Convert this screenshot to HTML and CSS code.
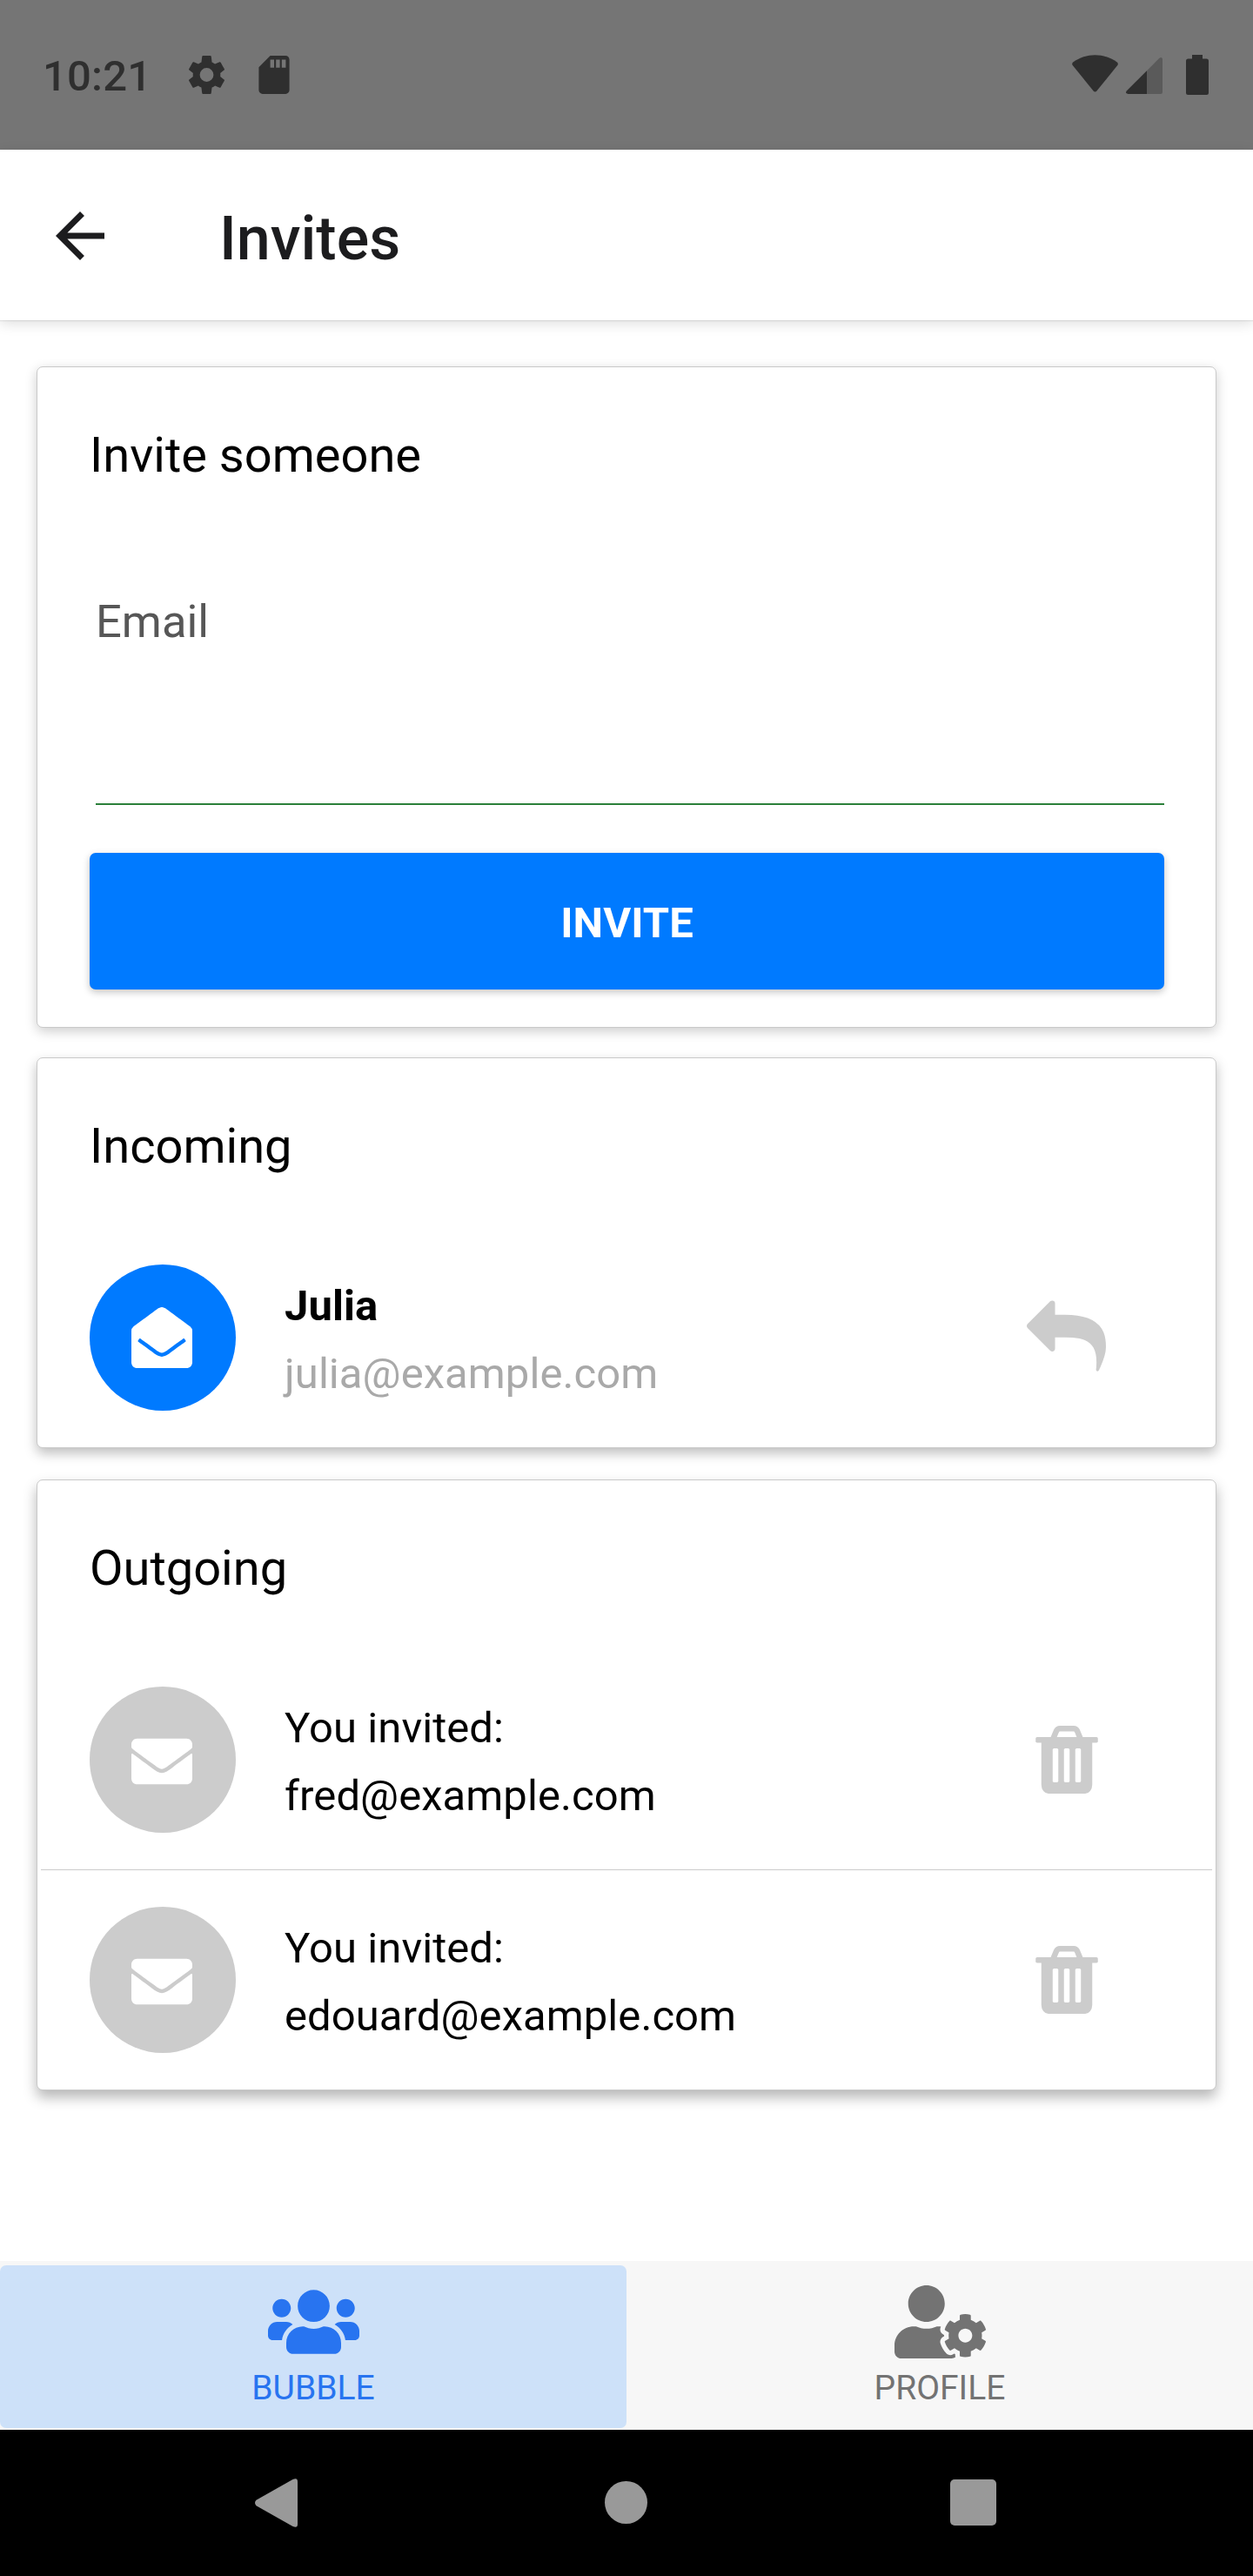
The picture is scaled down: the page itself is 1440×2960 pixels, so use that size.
FILE: index.html
```html
<!DOCTYPE html>
<html lang="en">
<head>
<meta charset="utf-8">
<title>Invites</title>
<link rel="stylesheet" href="styles.css">
</head>
<body>
<svg class="sprite" aria-hidden="true">
  <symbol id="envelope" viewBox="0 0 512 512"><path d="M502.3 190.8c3.9-3.1 9.7-.2 9.7 4.7V400c0 26.5-21.5 48-48 48H48c-26.5 0-48-21.5-48-48V195.6c0-5 5.7-7.8 9.7-4.7 22.4 17.4 52.1 39.5 154.1 113.6 21.1 15.4 56.7 47.8 92.2 47.6 35.7.3 72-32.8 92.3-47.6 102-74.1 131.6-96.3 154-113.7zM256 320c23.2.4 56.6-29.2 73.4-41.4 132.7-96.3 142.8-104.7 173.4-128.7 5.8-4.5 9.2-11.5 9.2-18.9v-19c0-26.5-21.5-48-48-48H48c-26.5 0-48 21.5-48 48v19c0 7.4 3.4 14.3 9.2 18.9 30.6 23.9 40.7 32.4 173.4 128.7 16.8 12.2 50.2 41.8 73.4 41.4z"/></symbol>
  <symbol id="trash" viewBox="192 128 1408 1536"><path d="M704 1376v-704q0-14-9-23t-23-9h-64q-14 0-23 9t-9 23v704q0 14 9 23t23 9h64q14 0 23-9t9-23zm256 0v-704q0-14-9-23t-23-9h-64q-14 0-23 9t-9 23v704q0 14 9 23t23 9h64q14 0 23-9t9-23zm256 0v-704q0-14-9-23t-23-9h-64q-14 0-23 9t-9 23v704q0 14 9 23t23 9h64q14 0 23-9t9-23zm-544-992h448l-48-117q-7-9-17-11h-317q-10 2-17 11zm928 32v64q0 14-9 23t-23 9h-96v948q0 83-47 143.5t-113 60.5h-832q-66 0-113-58.5t-47-141.5v-952h-96q-14 0-23-9t-9-23v-64q0-14 9-23t23-9h309l70-167q15-37 54-63t79-26h320q40 0 79 26t54 63l70 167h309q14 0 23 9t9 23z"/></symbol>
</svg>

<div class="status-bar">
  <span class="clock">10:21</span>
  <svg class="status-gear" viewBox="2.2 2 19.6 20"><path d="M19.14 12.94c.04-.3.06-.61.06-.94 0-.32-.02-.64-.07-.94l2.03-1.58c.18-.14.23-.41.12-.61l-1.92-3.32c-.12-.22-.37-.29-.59-.22l-2.39.96c-.5-.38-1.03-.7-1.62-.94l-.36-2.94c-.04-.24-.24-.41-.48-.41h-3.84c-.24 0-.43.17-.47.41l-.36 2.94c-.59.24-1.13.57-1.62.94l-2.39-.96c-.22-.08-.47 0-.59.22L2.74 8.87c-.12.21-.08.47.12.61l2.03 1.58c-.05.3-.09.63-.09.94s.02.64.07.94l-2.03 1.58c-.18.14-.23.41-.12.61l1.92 3.32c.12.22.37.29.59.22l2.39-.96c.5.38 1.03.7 1.62.94l.36 2.94c.05.24.24.41.48.41h3.84c.24 0 .44-.17.47-.41l.36-2.94c.59-.24 1.13-.56 1.62-.94l2.39.96c.22.08.47 0 .59-.22l1.92-3.32c.12-.22.07-.47-.12-.61l-2.01-1.58zM12 15.6A3.6 3.6 0 1 1 12 8.4a3.6 3.6 0 0 1 0 7.2z"/></svg>
  <svg class="status-sd" viewBox="4 2 16 20"><path fill-rule="evenodd" d="M18 2h-8L4.02 8 4 20c0 1.1.9 2 2 2h12c1.1 0 2-.9 2-2V4c0-1.1-.9-2-2-2zM10 4h2v4.200h-2zM13 4h2v4.200h-2zM16 4h2.100v4.200h-2.100z"/></svg>
  <svg class="status-wifi" viewBox="0 0 53 43"><path d="M1.200 8.500C16-2.500 37-2.500 51.800 8.500Q53.600 10 52.300 12L28.600 41.300Q26.500 43.800 24.400 41.300L.7 12Q-.6 10 1.200 8.500z"/></svg>
  <svg class="status-signal" viewBox="0 0 42 42"><path opacity=".38" d="M24 15.300L38.200 1Q39.300 0 40.500 0Q42 .3 42 2V40Q42 42 40 42H24z"/><path d="M24 15.300V42H2.500Q-1.200 41.500.7 38.600z"/></svg>
  <svg class="status-battery" viewBox="0 0 26 46"><path d="M7 0h12v4.500h4.500Q26 4.500 26 7v36.500Q26 46 23.500 46h-21Q0 46 0 43.500V7Q0 4.500 2.500 4.500H7z"/></svg>
</div>

<header class="app-bar">
  <svg class="back" viewBox="0 0 24 24"><path d="M20 11H7.830l5.590-5.590L12 4l-8 8 8 8 1.410-1.410L7.830 13H20v-2z"/></svg>
  <h1 class="app-title">Invites</h1>
</header>

<main class="content">
  <section class="card card-form">
    <h2 class="card-title">Invite someone</h2>
    <label class="field"><span class="field-label">Email</span></label>
    <button class="invite-button" type="button">INVITE</button>
  </section>

  <section class="card card-incoming">
    <h2 class="card-title">Incoming</h2>
    <div class="row">
      <span class="avatar avatar-active">
        <svg class="avatar-icon" viewBox="0 0 512 512"><path d="M512 464c0 26.510-21.490 48-48 48H48c-26.510 0-48-21.490-48-48V200.724a48 48 0 0 1 18.387-37.776c24.913-19.529 45.501-35.365 164.200-121.511C199.412 29.170 232.797-.347 256 .003c23.198-.354 56.596 29.172 73.413 41.433 118.687 86.137 139.303 101.995 164.200 121.512A48 48 0 0 1 512 200.724V464zm-65.666-196.605c-2.563-3.728-7.700-4.595-11.339-1.907-22.845 16.873-55.462 40.705-105.582 77.079-16.825 12.266-50.210 41.781-73.413 41.430-23.211.344-56.559-29.143-73.413-41.430-50.114-36.370-82.734-60.204-105.582-77.079-3.639-2.688-8.776-1.821-11.339 1.907l-9.072 13.196a7.998 7.998 0 0 0 1.839 10.967c22.887 16.899 55.454 40.690 105.303 76.868 20.274 14.781 56.524 47.813 92.264 47.573 35.724.242 71.961-32.771 92.263-47.573 49.850-36.179 82.418-59.970 105.303-76.868a7.998 7.998 0 0 0 1.839-10.967l-9.072-13.196z"/></svg>
      </span>
      <div class="row-text"><strong>Julia</strong><span class="muted">julia@example.com</span></div>
      <span class="action"><svg class="reply" viewBox="0 64 1792 1600"><path d="M1792 1120q0 166-127 451-3 7-10.500 24t-13.500 30-13 22q-12 17-28 17-15 0-23.500-10t-8.500-25q0-9 2.500-26.500t2.500-23.500q5-68 5-123 0-101-17.500-181t-48.500-138.500-80-101-105.500-69.500-133-42.500-154-21.500-175.500-6h-224v256q0 26-19 45t-45 19-45-19l-512-512q-19-19-19-45t19-45l512-512q19-19 45-19t45 19 19 45v256h224q713 0 875 403 53 134 53 333z"/></svg></span>
    </div>
  </section>

  <section class="card card-outgoing">
    <h2 class="card-title">Outgoing</h2>
    <div class="row">
      <span class="avatar"><svg class="avatar-icon avatar-closed"><use href="#envelope"/></svg></span>
      <div class="row-text"><span>You invited:</span><span>fred@example.com</span></div>
      <span class="action"><svg class="trash"><use href="#trash"/></svg></span>
    </div>
    <hr class="divider">
    <div class="row">
      <span class="avatar"><svg class="avatar-icon avatar-closed"><use href="#envelope"/></svg></span>
      <div class="row-text"><span>You invited:</span><span>edouard@example.com</span></div>
      <span class="action"><svg class="trash"><use href="#trash"/></svg></span>
    </div>
  </section>
</main>

<nav class="tabs">
  <a class="tab tab-active">
    <svg class="tab-icon" viewBox="0 0 640 512"><path d="M96 224c35.300 0 64-28.700 64-64s-28.700-64-64-64-64 28.700-64 64 28.700 64 64 64zm448 0c35.300 0 64-28.700 64-64s-28.700-64-64-64-64 28.700-64 64 28.700 64 64 64zm32 32h-64c-17.600 0-33.500 7.100-45.100 18.600 40.300 22.100 68.900 62 75.100 109.400h66c17.700 0 32-14.300 32-32v-32c0-35.300-28.700-64-64-64zm-256 0c61.900 0 112-50.100 112-112S381.900 32 320 32 208 82.100 208 144s50.100 112 112 112zm76.800 32h-8.300c-20.800 10-43.900 16-68.500 16s-47.600-6-68.500-16h-8.300C179.600 288 128 339.600 128 403.200V432c0 26.500 21.500 48 48 48h288c26.500 0 48-21.500 48-48v-28.800c0-63.600-51.600-115.200-115.200-115.200zm-223.700-13.400C161.500 263.100 145.600 256 128 256H64c-35.300 0-64 28.700-64 64v32c0 17.700 14.300 32 32 32h65.900c6.300-47.400 34.900-87.300 75.200-109.400z"/></svg>
    <span>BUBBLE</span>
  </a>
  <a class="tab">
    <svg class="tab-icon" viewBox="0 0 640 512"><path d="M610.500 373.300c2.600-14.100 2.600-28.500 0-42.600l25.800-14.900c3-1.700 4.300-5.200 3.300-8.500-6.700-21.600-18.200-41.200-33.200-57.400-2.300-2.500-6-3.100-9-1.400l-25.800 14.900c-10.900-9.300-23.400-16.500-36.900-21.300v-29.800c0-3.400-2.400-6.400-5.700-7.100-22.300-5-45-4.800-66.200 0-3.300.7-5.700 3.700-5.700 7.100v29.800c-13.500 4.800-26 12-36.900 21.300l-25.800-14.900c-2.900-1.700-6.700-1.100-9 1.400-15 16.200-26.500 35.800-33.200 57.400-1 3.300.4 6.800 3.300 8.500l25.800 14.900c-2.600 14.100-2.600 28.500 0 42.600l-25.800 14.900c-3 1.700-4.300 5.200-3.300 8.500 6.700 21.600 18.200 41.100 33.200 57.400 2.300 2.500 6 3.100 9 1.400l25.800-14.900c10.900 9.300 23.400 16.500 36.900 21.300v29.800c0 3.400 2.400 6.400 5.700 7.100 22.300 5 45 4.800 66.200 0 3.300-.7 5.700-3.700 5.700-7.100v-29.800c13.500-4.800 26-12 36.900-21.300l25.800 14.900c2.900 1.700 6.700 1.100 9-1.400 15-16.200 26.500-35.800 33.200-57.400 1-3.300-.4-6.800-3.300-8.500l-25.800-14.900zM496 400.500c-26.800 0-48.500-21.800-48.500-48.500s21.800-48.500 48.500-48.500 48.500 21.800 48.500 48.500-21.700 48.500-48.500 48.500zM224 256c70.700 0 128-57.300 128-128S294.700 0 224 0 96 57.300 96 128s57.300 128 128 128zm201.200 226.500c-2.300-1.200-4.600-2.600-6.800-3.900l-7.900 4.600c-6 3.400-12.800 5.300-19.600 5.300-10.900 0-21.400-4.600-28.900-12.600-18.300-19.800-32.300-43.900-40.200-69.600-5.500-17.700 1.900-36.400 17.900-45.700l7.900-4.600c-.1-2.600-.1-5.200 0-7.800l-7.900-4.600c-16-9.200-23.400-28-17.900-45.700.9-2.900 2.200-5.800 3.200-8.700-3.800-.3-7.500-1.200-11.400-1.200h-16.700c-22.200 10.200-46.900 16-72.900 16s-50.600-5.800-72.900-16h-16.700C60.200 288 0 348.200 0 422.400V464c0 26.500 21.500 48 48 48h352c10.100 0 19.500-3.200 27.200-8.500-1.200-3.800-2-7.700-2-11.800v-9.200z"/></svg>
    <span>PROFILE</span>
  </a>
</nav>

<div class="system-nav">
  <svg class="nav-back" viewBox="0 0 49 56"><path d="M1.500 24.800L43.500 1Q49-1.500 49 3.500V52.500Q49 57.500 43.500 55L1.500 31.200Q-1.500 28 1.500 24.800z"/></svg>
  <span class="nav-home"></span>
  <span class="nav-recent"></span>
</div>
</body>
</html>
```
FILE: styles.css
```css
* { box-sizing: border-box; }

body {
  margin: 0;
  width: 1440px;
  height: 2960px;
  display: flex;
  flex-direction: column;
  overflow: hidden;
  background: #fff;
  color: #000;
  font-family: Roboto, "Liberation Sans", sans-serif;
  font-size: 49px;
}

svg { display: block; flex: none; fill: currentColor; }
h1, h2 { margin: 0; }
.sprite { position: absolute; width: 0; height: 0; }

/* Android status bar */
.status-bar {
  height: 172px;
  flex: none;
  display: flex;
  align-items: flex-start;
  padding: 63px 51px 0 49px;
  background: #757575;
  color: #2f2f2f;
}
.clock { width: 167px; font-weight: 500; line-height: 50px; letter-spacing: .2px; }
.status-gear { width: 43px; height: 44px; margin-top: 1px; }
.status-sd { width: 36px; height: 44px; margin: 1px auto 0 38px; }
.status-wifi { width: 53px; height: 43px; }
.status-signal { width: 42px; height: 42px; margin: 3px 27px 0 9px; }
.status-battery { width: 26px; height: 46px; }

/* App bar */
.app-bar {
  height: 196px;
  flex: none;
  display: flex;
  align-items: flex-start;
  padding: 57px 50px 0;
  color: #1c1c1e;
  box-shadow: 0 1px 1px rgba(0, 0, 0, .08), 0 4px 14px rgba(0, 0, 0, .13);
}
.back { width: 84px; height: 84px; }
.app-title {
  margin: 5px 0 0 118px;
  font-size: 70px;
  font-weight: 500;
  line-height: 80px;
}

/* Cards */
.content { flex: 1; padding: 53px 42px 0; }
.card {
  border: 1px solid #c9c9c9;
  border-radius: 7px;
  background: #fff;
}
.card-form { height: 760px; padding: 0 59px 0 60px; box-shadow: 0 4px 14px rgba(0, 0, 0, .2); }
.card-incoming { margin-top: 34px; box-shadow: 0 6px 14px rgba(0, 0, 0, .26); }
.card-outgoing { margin-top: 36px; box-shadow: 0 8px 15px rgba(0, 0, 0, .29); }
.card-title {
  padding: 61px 0 0 60px;
  height: 195px;
  font-size: 56px;
  font-weight: 400;
  line-height: 80px;
}
.card-form .card-title { padding-left: 0; }

.field {
  display: block;
  height: 308px;
  margin-left: 7px;
  padding-top: 66px;
  border-bottom: 2px solid #2b803a;
  color: #575757;
  font-size: 52.5px;
  line-height: 62px;
}
.field-label { display: block; }
.invite-button {
  display: block;
  width: 100%;
  height: 157px;
  margin-top: 55px;
  padding: 5px 0 0;
  border: 0;
  border-radius: 7px;
  background: #007aff;
  color: #fff;
  font: 700 49px/70px Roboto, "Liberation Sans", sans-serif;
  box-shadow: 0 3px 8px rgba(0, 0, 0, .24);
}

.row {
  display: flex;
  align-items: center;
  height: 252px;
  padding: 0 60px;
}
.avatar {
  width: 168px;
  height: 168px;
  flex: none;
  display: flex;
  align-items: center;
  justify-content: center;
  padding-right: 2px;
  border-radius: 50%;
  background: #ccc;
  color: #fff;
}
.avatar-active { background: #007aff; }
.avatar-icon { width: 70px; height: 70px; }
.avatar-closed { margin-top: 4px; }
.row-text {
  flex: 1;
  display: flex;
  flex-direction: column;
  padding: 6px 0 0 56px;
  line-height: 78px;
  letter-spacing: .07px;
}
.muted { color: #a9a9a9; }
.action {
  width: 115px;
  flex: none;
  display: flex;
  justify-content: center;
  margin-right: 54px;
  color: #ccc;
}
.reply { width: 91px; height: 82px; margin-top: -4px; }
.trash { width: 72px; height: 78px; }
.divider {
  height: 1px;
  margin: 0 4px;
  border: 0;
  background: #ccc;
}

/* Bottom tabs */
.tabs {
  height: 194px;
  flex: none;
  display: flex;
  padding: 5px 0 2px;
  background: #f7f7f7;
}
.tab {
  flex: 1;
  display: flex;
  flex-direction: column;
  align-items: center;
  padding-top: 23px;
  border-radius: 7px;
  color: #737373;
  font-size: 39px;
  line-height: 46px;
}
.tab span { margin-top: 11px; }
.tab-active { background: #cde1f9; color: #2874f0; }
.tab-icon { width: 105px; height: 84px; }

/* System navigation */
.system-nav {
  height: 168px;
  flex: none;
  display: flex;
  align-items: flex-start;
  padding: 56px 0 0 293px;
  background: #000;
  color: #999;
}
.nav-back { width: 49px; height: 56px; }
.nav-home { width: 49px; height: 49px; margin: 3px 348px 0 353px; border-radius: 50%; background: #999; }
.nav-recent { width: 53px; height: 53px; margin-top: 1px; border-radius: 5px; background: #999; }
```
